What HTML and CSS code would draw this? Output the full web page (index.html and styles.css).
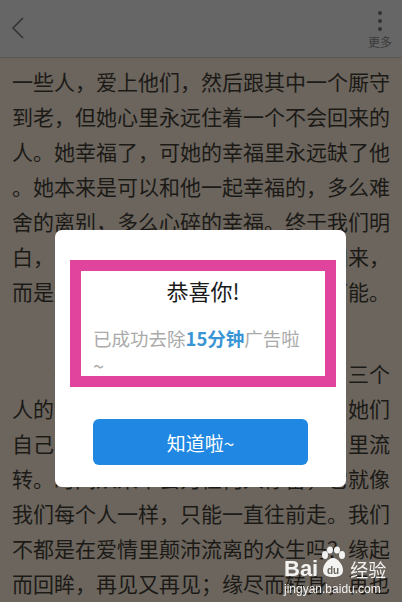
FILE: index.html
```html
<!DOCTYPE html>
<html lang="zh-CN">
<head>
  <meta charset="UTF-8">
  <title>阅读</title>
  <meta name="viewport" content="width=device-width, initial-scale=1.0">
  <link rel="stylesheet" href="styles.css">
</head>
<body>
  <!-- 顶部栏 -->
  <header class="topbar">
    <svg class="back" width="16" height="24" viewBox="0 0 16 24">
      <polyline points="13,2 3,12 13,22" fill="none" stroke="#333" stroke-width="1.6"/>
    </svg>
    <div class="more">
      <span class="dots"><i></i><i></i><i></i></span>
      <span class="more-label">更多</span>
    </div>
  </header>

  <!-- 正文 -->
  <main class="reader">
    <p class="para">
      <span class="line">一些人，爱上他们，然后跟其中一个厮守</span>
      <span class="line">到老，但她心里永远住着一个不会回来的</span>
      <span class="line">人。她幸福了，可她的幸福里永远缺了他</span>
      <span class="line">。她本来是可以和他一起幸福的，多么难</span>
      <span class="line">舍的离别，多么心碎的幸福。终于我们明</span>
      <span class="line">白，爱情不是占有，也不是回头与归来，</span>
      <span class="line">而是放手，是成全，是让一切都有可能。</span>
    </p>
    <p class="para para-next">
      <span class="line">　　一段爱情里，往往不止两个人，三个</span>
      <span class="line">人的故事，每个人都有各自的心事，她们</span>
      <span class="line">自己守着自己的心，任凭时光在岁月里流</span>
      <span class="line">转。时间从来不会为任何人停留，它就像</span>
      <span class="line">我们每个人一样，只能一直往前走。我们</span>
      <span class="line">不都是在爱情里颠沛流离的众生吗？缘起</span>
      <span class="line">而回眸，再见又再见；缘尽而转身，再也</span>
    </p>
  </main>

  <!-- 弹窗 -->
  <div class="dialog">
    <div class="dialog-body">
      <h2 class="dialog-title">恭喜你!</h2>
      <p class="dialog-text">已成功去除<b>15分钟</b>广告啦<br><span class="tilde">~</span></p>
    </div>
    <button class="dialog-btn">知道啦~</button>
  </div>

  <!-- 水印 -->
  <div class="watermark">
    <div class="wm-logo">
      <span class="wm-bai">Bai</span>
      <svg class="wm-paw" width="28" height="34" viewBox="0 0 28 34">
        <ellipse cx="6" cy="9" rx="3" ry="4" fill="#fff"/>
        <ellipse cx="11" cy="4" rx="3" ry="3.6" fill="#fff"/>
        <ellipse cx="18" cy="4" rx="3" ry="3.6" fill="#fff"/>
        <ellipse cx="23" cy="9" rx="3" ry="4" fill="#fff"/>
        <path d="M14 12 C9 12 4 19 4 24 C4 30 9 31 14 31 C19 31 24 30 24 24 C24 19 19 12 14 12 Z" fill="#fff"/>
        <text x="14" y="28" text-anchor="middle" font-size="10" font-weight="bold" fill="#6b655d" font-family="Liberation Sans, sans-serif">du</text>
      </svg>
      <span class="wm-jy">经验</span>
    </div>
    <div class="wm-url">jingyan.baidu.com</div>
  </div>
</body>
</html>
```

FILE: styles.css
```css
body {
  margin: 0;
  padding: 0;
  background: #6b655d;
  font-family: "Noto Sans CJK SC", "Noto Sans", sans-serif;
  width: 402px;
  height: 602px;
  overflow: hidden;
}

.topbar {
  height: 57px;
  background: #666666;
  border-bottom: 1px solid #5a5650;
  display: flex;
  justify-content: space-between;
  align-items: flex-start;
  padding: 0 10px 0 10px;
}

.back {
  margin-top: 16px;
}

.more {
  display: flex;
  flex-direction: column;
  align-items: center;
  padding-top: 11px;
}

.dots {
  display: flex;
  flex-direction: column;
  gap: 4px;
}

.dots i {
  display: block;
  width: 4px;
  height: 4px;
  border-radius: 50%;
  background: #333;
}

.more-label {
  font-size: 12px;
  line-height: 14px;
  color: #3a3a3a;
  margin-top: 4px;
}

.reader {
  padding: 6px 0 0 12px;
}

.para {
  margin: 0;
  font-size: 21px;
  line-height: 35px;
  color: #1c1a17;
}

.para-next {
  margin-top: 47px;
}

.line {
  display: block;
  white-space: nowrap;
}

/* 弹窗 */
.dialog {
  position: fixed;
  left: 55px;
  top: 230px;
  width: 291px;
  height: 257px;
  box-sizing: border-box;
  background: #fff;
  border-radius: 7px;
  padding: 30px 10px 22px 15px;
  display: flex;
  flex-direction: column;
  align-items: flex-start;
}

.dialog-body {
  width: 266px;
  height: 127px;
  box-sizing: border-box;
  border: 11px solid #e0449c;
  padding: 0 12px;
}

.dialog-title {
  margin: 8px 0 0;
  text-align: center;
  font-size: 22px;
  line-height: 22px;
  font-weight: 400;
  color: #1a1a1a;
}

.dialog-text {
  margin: 24px 0 0;
  font-size: 18.5px;
  line-height: 27px;
  color: #aaaaaa;
}

.dialog-text b {
  color: #3a95d5;
}

.tilde {
  font-size: 20px;
}

.dialog-btn {
  margin: 32px 0 0 23px;
  width: 215px;
  height: 46px;
  border: none;
  border-radius: 6px;
  background: #2088e2;
  color: #fff;
  font-family: inherit;
  font-size: 19px;
}

/* 水印 */
.watermark {
  position: fixed;
  left: 284px;
  top: 542px;
  color: #fff;
  opacity: 0.92;
}

.wm-logo {
  display: flex;
  align-items: flex-end;
  height: 38px;
}

.wm-bai {
  font-family: "Liberation Sans", sans-serif;
  font-weight: bold;
  font-size: 22px;
  line-height: 22px;
  margin-right: 1px;
}

.wm-jy {
  font-size: 18px;
  line-height: 22px;
  margin-left: 3px;
}

.wm-url {
  font-family: "Liberation Sans", sans-serif;
  font-size: 12px;
  line-height: 14px;
  margin-top: 2px;
}
```
